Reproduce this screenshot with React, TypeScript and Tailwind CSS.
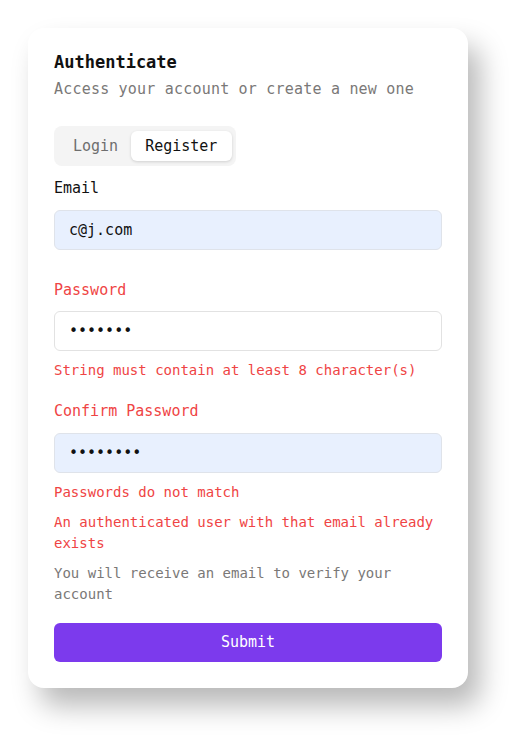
export default function App() {
  return (
    <div className="min-h-screen bg-white p-[28px] font-['DejaVu_Sans_Mono',monospace]">
      <div className="w-[440px] rounded-[16px] bg-white px-[26px] pt-[22px] pb-[26px] shadow-[12px_18px_28px_rgba(0,0,0,0.28)]">
        {/* Header */}
        <h1 className="text-[17px] leading-[24px] font-bold text-[#111]">Authenticate</h1>
        <p className="mt-[4px] text-[15px] leading-[22px] tracking-[0.2px] text-[#7a7877]">
          Access your account or create a new one
        </p>

        {/* Tabs */}
        <div className="mt-[26px] inline-flex h-[40px] items-center rounded-[8px] bg-[#f4f4f4] pl-[5px] pr-[4px]">
          <button className="h-[30px] pl-[14px] pr-[13px] text-[15px] text-[#6e6e6e]">Login</button>
          <button className="h-[30px] rounded-[6px] bg-white pl-[14px] pr-[15px] text-[15px] text-[#111] shadow-[0_1px_3px_rgba(0,0,0,0.15)]">
            Register
          </button>
        </div>

        {/* Email */}
        <label className="mt-[11px] block text-[15px] leading-[22px] text-[#111]">Email</label>
        <div className="mt-[11px] flex h-[40px] items-center rounded-[6px] border border-[#dfe3ea] bg-[#e8f0fe] px-[14px] text-[15px] text-[#111]">
          c@j.com
        </div>

        {/* Password */}
        <label className="mt-[29px] block text-[15px] leading-[22px] text-[#ef4444]">Password</label>
        <div className="mt-[10px] flex h-[40px] items-center rounded-[6px] border border-[#e2e2e2] bg-white px-[14px] text-[15px] text-[#111]">
          •••••••
        </div>
        <p className="mt-[9px] text-[14px] leading-[20px] text-[#ef4444]">
          String must contain at least 8 character(s)
        </p>

        {/* Confirm */}
        <label className="mt-[20px] block text-[15px] leading-[22px] text-[#ef4444]">Confirm Password</label>
        <div className="mt-[11px] flex h-[40px] items-center rounded-[6px] border border-[#dfe3ea] bg-[#e8f0fe] px-[14px] text-[15px] text-[#111]">
          ••••••••
        </div>
        <p className="mt-[9px] text-[14px] leading-[20px] text-[#ef4444]">Passwords do not match</p>

        <p className="mt-[10px] text-[14px] leading-[21px] text-[#ef4444]">
          An authenticated user with that email already exists
        </p>
        <p className="mt-[9px] text-[14px] leading-[21px] text-[#7a7877]">
          You will receive an email to verify your account
        </p>

        <button className="mt-[18px] flex h-[39px] w-full items-center justify-center rounded-[6px] bg-[#7c3aed] text-[15px] text-white">
          Submit
        </button>
      </div>
    </div>
  );
}
